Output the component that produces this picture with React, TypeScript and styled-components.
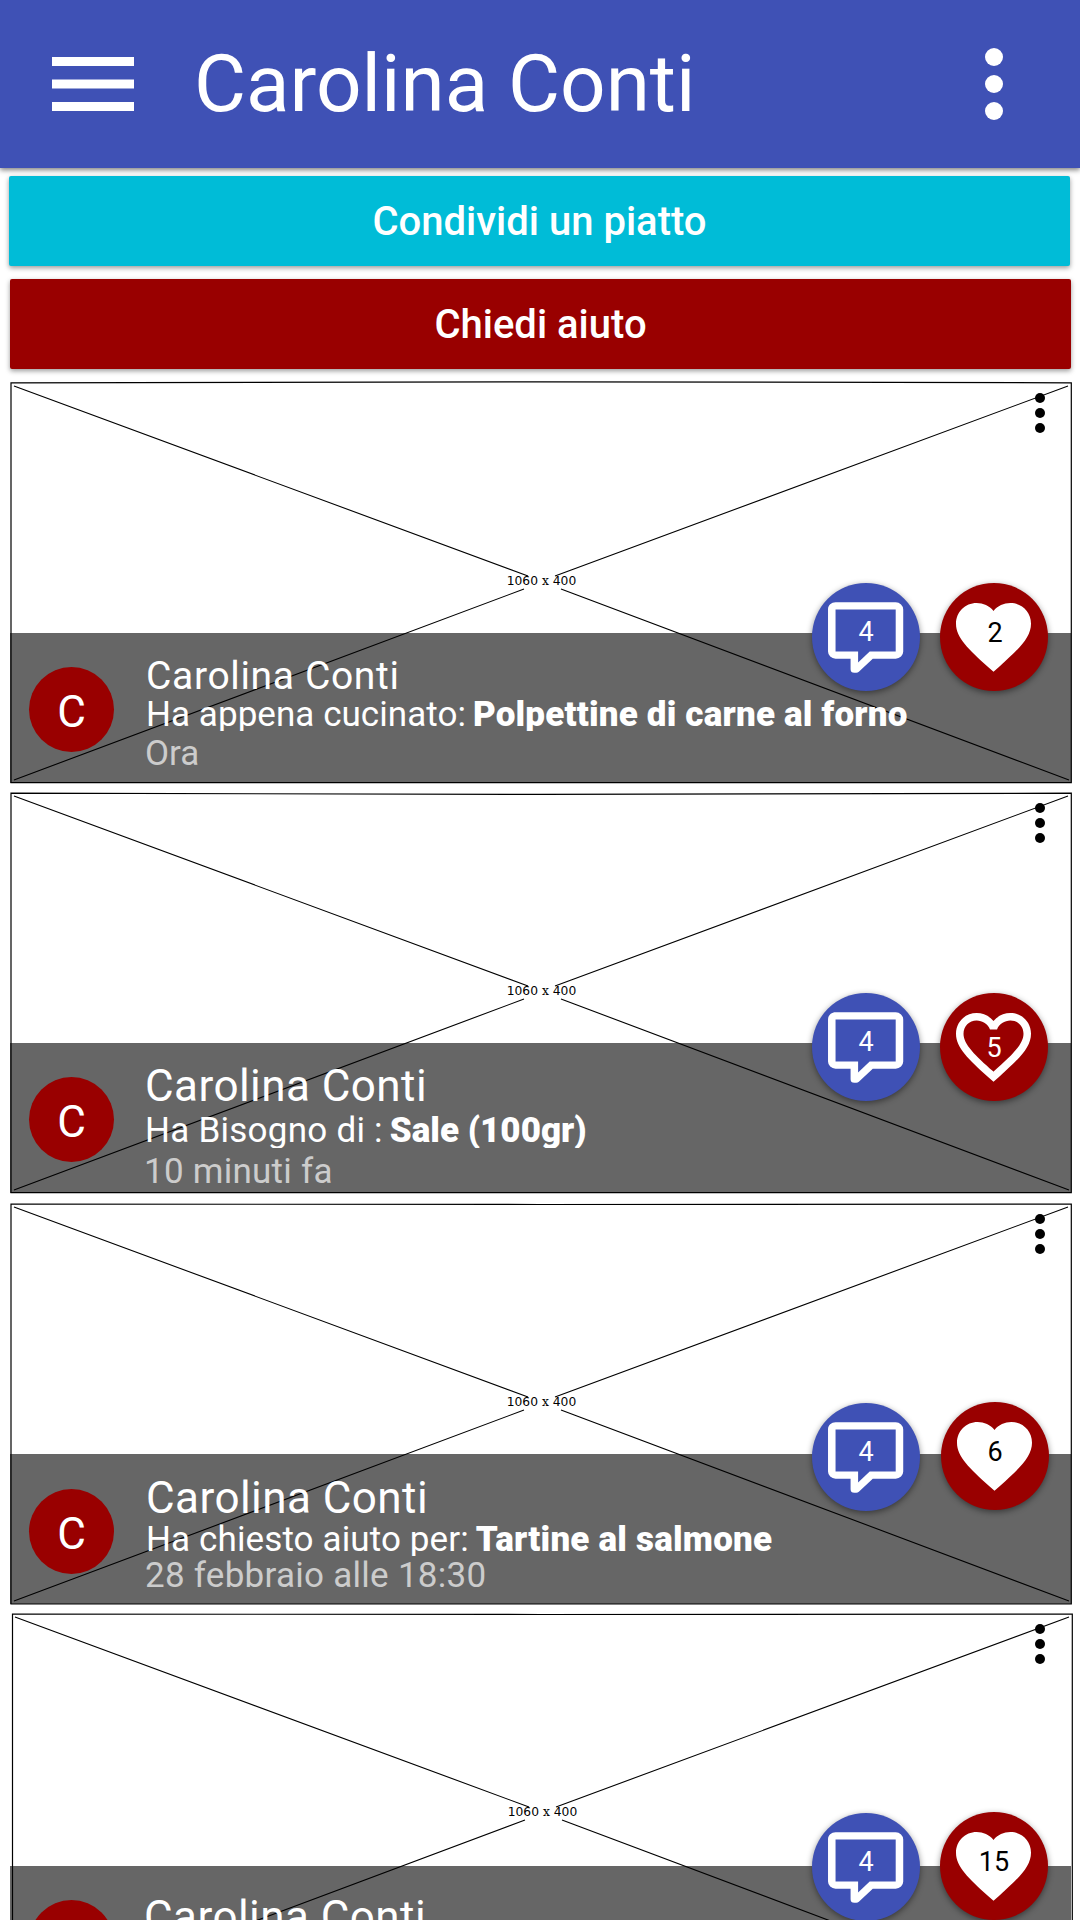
import React from "react";
import styled, { createGlobalStyle } from "styled-components";

const GlobalStyle = createGlobalStyle`
  * { box-sizing: border-box; }
  html, body { margin: 0; padding: 0; background: #fff; }
  body { font-family: Roboto, "Liberation Sans", sans-serif; overflow: hidden; }
`;

const Screen = styled.div`
  width: 1080px;
  height: 1920px;
  overflow: hidden;
  background: #fff;
`;

const AppBar = styled.header`
  height: 168px;
  display: flex;
  align-items: center;
  padding: 0 77px 0 52px;
  background: #3f51b5;
  box-shadow: 0 2px 5px rgba(0, 0, 0, 0.5);
  color: #fff;
`;

const MenuIcon = styled.svg`
  width: 82px;
  height: 54px;
  flex: none;
`;

const Title = styled.h1`
  flex: 1;
  margin: 0 0 0 60px;
  font-size: 80px;
  line-height: 94px;
  font-weight: 400;
  white-space: nowrap;
`;

const DotsIcon = styled.svg`
  width: 18px;
  height: 72px;
  flex: none;
`;

const Actions = styled.div`
  display: flex;
  flex-direction: column;
  gap: 13px;
  padding: 8px 9px 12px;
`;

const Action = styled.button<{ $color: string; $shift: number }>`
  width: 1061px;
  height: 90px;
  margin: 0 0 0 ${(p) => p.$shift}px;
  padding: 2px 0 0;
  border: 0;
  border-radius: 2px;
  background: ${(p) => p.$color};
  box-shadow: 0 2px 5px rgba(0, 0, 0, 0.4);
  color: #fff;
  font: 500 40px/88px Roboto, "Liberation Sans", sans-serif;
`;

const Feed = styled.main`
  display: flex;
  flex-direction: column;
`;

const Card = styled.article<{ $gap: number; $overlay: number }>`
  position: relative;
  height: 402px;
  flex: none;
  margin: 0 8px ${(p) => p.$gap}px 10px;
  padding-top: ${(p) => p.$overlay}px;
`;

const Placeholder = styled.svg`
  position: absolute;
  inset: 0;
  width: 1062px;
  height: 402px;
  overflow: visible;
`;

const CardMenu = styled.svg`
  position: absolute;
  top: 11px;
  left: 1024px;
  width: 12px;
  height: 42px;
`;

const Overlay = styled.div`
  position: relative;
  display: flex;
  width: 1061px;
  height: 150px;
  padding-left: 19px;
  background: rgba(0, 0, 0, 0.6);
`;

const Avatar = styled.div<{ $top: number }>`
  flex: none;
  width: 85px;
  height: 85px;
  margin-top: ${(p) => p.$top}px;
  padding-top: 3px;
  border-radius: 50%;
  background: #900;
  color: #fff;
  font-size: 44px;
  line-height: 85px;
  text-align: center;
`;

const Details = styled.div<{ $top: number; $left: number }>`
  display: flex;
  flex-direction: column;
  padding-top: ${(p) => p.$top}px;
  margin-left: ${(p) => p.$left}px;
  white-space: nowrap;
  color: #fff;
`;

const Name = styled.div<{ $size: number; $height: number; $spacing: number }>`
  height: ${(p) => p.$height}px;
  font-size: ${(p) => p.$size}px;
  line-height: 48px;
  letter-spacing: ${(p) => p.$spacing}px;
`;

const Message = styled.div<{ $height: number; $clip: number }>`
  height: ${(p) => p.$height}px;
  font-size: 35px;
  line-height: 40px;
  clip-path: inset(0 0 ${(p) => p.$clip}px 0);
`;

const Phrase = styled.span<{ $spacing: number }>`
  letter-spacing: ${(p) => p.$spacing}px;
`;

const Dish = styled.strong<{ $spacing: number }>`
  margin-left: 7px;
  font-weight: 900;
  letter-spacing: ${(p) => p.$spacing}px;
`;

const Time = styled.div<{ $spacing: number }>`
  margin-left: -1px;
  font-size: 35px;
  line-height: 40px;
  color: #ccc;
  letter-spacing: ${(p) => p.$spacing}px;
`;

const Badge = styled.button<{ $x: number; $y: number; $color: string }>`
  position: absolute;
  left: ${(p) => p.$x}px;
  top: ${(p) => p.$y}px;
  width: 108px;
  height: 108px;
  padding: 0;
  border: 0;
  border-radius: 50%;
  background: ${(p) => p.$color};
  box-shadow: 0 2px 6px rgba(0, 0, 0, 0.45);
`;

const BadgeIcon = styled.svg`
  display: block;
  width: 108px;
  height: 108px;
`;

const Count = styled.span<{ $color: string; $top: number; $left?: number }>`
  position: absolute;
  left: ${(p) => p.$left ?? 0}px;
  top: ${(p) => p.$top}px;
  width: 108px;
  font: 400 27px/32px Roboto, "Liberation Sans", sans-serif;
  text-align: center;
  color: ${(p) => p.$color};
`;

type Post = {
  gap: number;
  overlay: number;
  frame: string;
  frameX: number;
  avatarTop: number;
  detailsTop: number;
  detailsLeft: number;
  nameSize: number;
  nameHeight: number;
  nameSpacing: number;
  phrase?: string;
  phraseSpacing?: number;
  dish?: string;
  dishSpacing?: number;
  messageHeight?: number;
  messageClip?: number;
  time?: string;
  timeSpacing?: number;
  commentY: number;
  likeX: number;
  likeY: number;
  likes: number;
  likesLeft: number;
  liked: boolean;
};

const posts: Post[] = [
  {
    gap: 8, overlay: 252, frame: "M1 1.8L530 .8L1061.3 1.8V401.6H1z", frameX: 0,
    avatarTop: 34, detailsTop: 19, detailsLeft: 32,
    nameSize: 39, nameHeight: 43, nameSpacing: 0.65,
    phrase: "Ha appena cucinato:", phraseSpacing: 0.05,
    dish: "Polpettine di carne al forno", dishSpacing: 0.18,
    messageHeight: 39, messageClip: 3,
    time: "Ora", timeSpacing: 0,
    commentY: 202, likeX: 930, likeY: 202, likes: 2, likesLeft: 1, liked: true,
  },
  {
    gap: 9, overlay: 252, frame: "M1 2.2L530 3.4L1061.3 2.2V401.7H1z", frameX: 0,
    avatarTop: 34, detailsTop: 19, detailsLeft: 31,
    nameSize: 44, nameHeight: 49, nameSpacing: 0.45,
    phrase: "Ha Bisogno di :", phraseSpacing: 0.25,
    dish: "Sale (100gr)", dishSpacing: 0,
    messageHeight: 41, messageClip: 4,
    time: "10 minuti fa", timeSpacing: 0.25,
    commentY: 202, likeX: 930, likeY: 202, likes: 5, likesLeft: 0, liked: false,
  },
  {
    gap: 8, overlay: 252, frame: "M1 2L530 2.5L1061.3 2V402H1z", frameX: 0,
    avatarTop: 35, detailsTop: 20, detailsLeft: 32,
    nameSize: 44, nameHeight: 46, nameSpacing: 0.45,
    phrase: "Ha chiesto aiuto per:", phraseSpacing: 0.12,
    dish: "Tartine al salmone", dishSpacing: 0.2,
    messageHeight: 36, messageClip: 0,
    time: "28 febbraio alle 18:30", timeSpacing: 0.27,
    commentY: 201, likeX: 931, likeY: 200, likes: 6, likesLeft: 0, liked: true,
  },
  {
    gap: 0, overlay: 254, frame: "M1.5 2L530 2.5L1061.3 2V402H1.5z", frameX: 1,
    avatarTop: 34, detailsTop: 27, detailsLeft: 30,
    nameSize: 44, nameHeight: 49, nameSpacing: 0.45,
    commentY: 201, likeX: 930, likeY: 200, likes: 15, likesLeft: 0, liked: true,
  },
];

const comment =
  "M9 22A1 1 0 0 1 8 21V18H4A2 2 0 0 1 2 16V4C2 2.89 2.9 2 4 2H20A2 2 0 0 1 22 4V16A2 2 0 0 1 20 18H13.9L10.2 21.71C10 21.9 9.75 22 9.5 22H9M10 16V19.08L13.08 16H20V4H4V16H10Z";
const heart =
  "M12 21.35l-1.45-1.32C5.4 15.36 2 12.28 2 8.5 2 5.42 4.42 3 7.5 3c1.74 0 3.41.81 4.5 2.09C13.09 3.81 14.76 3 16.5 3 19.58 3 22 5.42 22 8.5c0 3.78-3.4 6.86-8.55 11.54L12 21.35z";
const heartHollow =
  "M12.1 18.55l-.1.1-.1-.1C7.14 14.24 4 11.39 4 8.5 4 6.5 5.5 5 7.5 5c1.54 0 3.04.99 3.57 2.36h1.87C13.46 5.99 14.96 5 16.5 5c2 0 3.5 1.5 3.5 3.5 0 2.89-3.14 5.74-7.9 10.05z";

function PostCard({ post }: { post: Post }) {
  return (
    <Card $gap={post.gap} $overlay={post.overlay}>
      <Placeholder viewBox="0 0 1062 402" fill="none" stroke="#000">
        <g transform={`translate(${post.frameX} 0)`}>
          <path d={post.frame} strokeWidth="1.2" />
          <path d="M4 5L518 195M545 195L1058 5M4 399L514 208M551 208L1059 399" strokeWidth="1.1" />
          <text
            x="531.5"
            y="204"
            textAnchor="middle"
            fill="#000"
            stroke="none"
            fontFamily="'DejaVu Sans', sans-serif"
            fontSize="12.3"
          >
            1060 <tspan fontFamily="'DejaVu Serif', serif">x</tspan> 400
          </text>
        </g>
      </Placeholder>
      <CardMenu viewBox="0 0 12 42">
        <circle cx="6" cy="6" r="5" />
        <circle cx="6" cy="21" r="5" />
        <circle cx="6" cy="36" r="5" />
      </CardMenu>
      <Overlay>
        <Avatar $top={post.avatarTop}>C</Avatar>
        <Details $top={post.detailsTop} $left={post.detailsLeft}>
          <Name $size={post.nameSize} $height={post.nameHeight} $spacing={post.nameSpacing}>
            Carolina Conti
          </Name>
          {post.phrase && (
            <Message $height={post.messageHeight ?? 40} $clip={post.messageClip ?? 0}>
              <Phrase $spacing={post.phraseSpacing ?? 0}>{post.phrase}</Phrase>
              <Dish $spacing={post.dishSpacing ?? 0}>{post.dish}</Dish>
            </Message>
          )}
          {post.time && <Time $spacing={post.timeSpacing ?? 0}>{post.time}</Time>}
        </Details>
      </Overlay>
      <Badge $x={802} $y={post.commentY} $color="#3f51b5">
        <BadgeIcon viewBox="0 0 108 108" fill="#fff">
          <path transform="translate(8.5 12.3) scale(3.76 3.52)" d={comment} />
        </BadgeIcon>
        <Count $color="#fff" $top={33}>4</Count>
      </Badge>
      <Badge $x={post.likeX} $y={post.likeY} $color="#900">
        <BadgeIcon viewBox="0 0 108 108">
          <g transform="translate(8.5 8.8) scale(3.75)">
            <path d={heart} fill="#fff" />
            {!post.liked && <path d={heartHollow} fill="#900" />}
          </g>
        </BadgeIcon>
        <Count
          $color={post.liked ? "#000" : "#fff"}
          $top={post.liked ? 34 : 39}
          $left={post.likesLeft}
        >
          {post.likes}
        </Count>
      </Badge>
    </Card>
  );
}

export default function App() {
  return (
    <Screen>
      <GlobalStyle />
      <AppBar>
        <MenuIcon viewBox="0 0 82 54" fill="#fff">
          <path d="M0 0h82v9H0zM0 22.5h82v9H0zM0 45h82v9H0z" />
        </MenuIcon>
        <Title>Carolina Conti</Title>
        <DotsIcon viewBox="0 0 18 72" fill="#fff">
          <circle cx="9" cy="9" r="9" />
          <circle cx="9" cy="36" r="9" />
          <circle cx="9" cy="63" r="9" />
        </DotsIcon>
      </AppBar>
      <Actions>
        <Action $color="#00bcd7" $shift={0}>Condividi un piatto</Action>
        <Action $color="#900" $shift={1}>Chiedi aiuto</Action>
      </Actions>
      <Feed>
        {posts.map((post, i) => (
          <PostCard key={i} post={post} />
        ))}
      </Feed>
    </Screen>
  );
}
